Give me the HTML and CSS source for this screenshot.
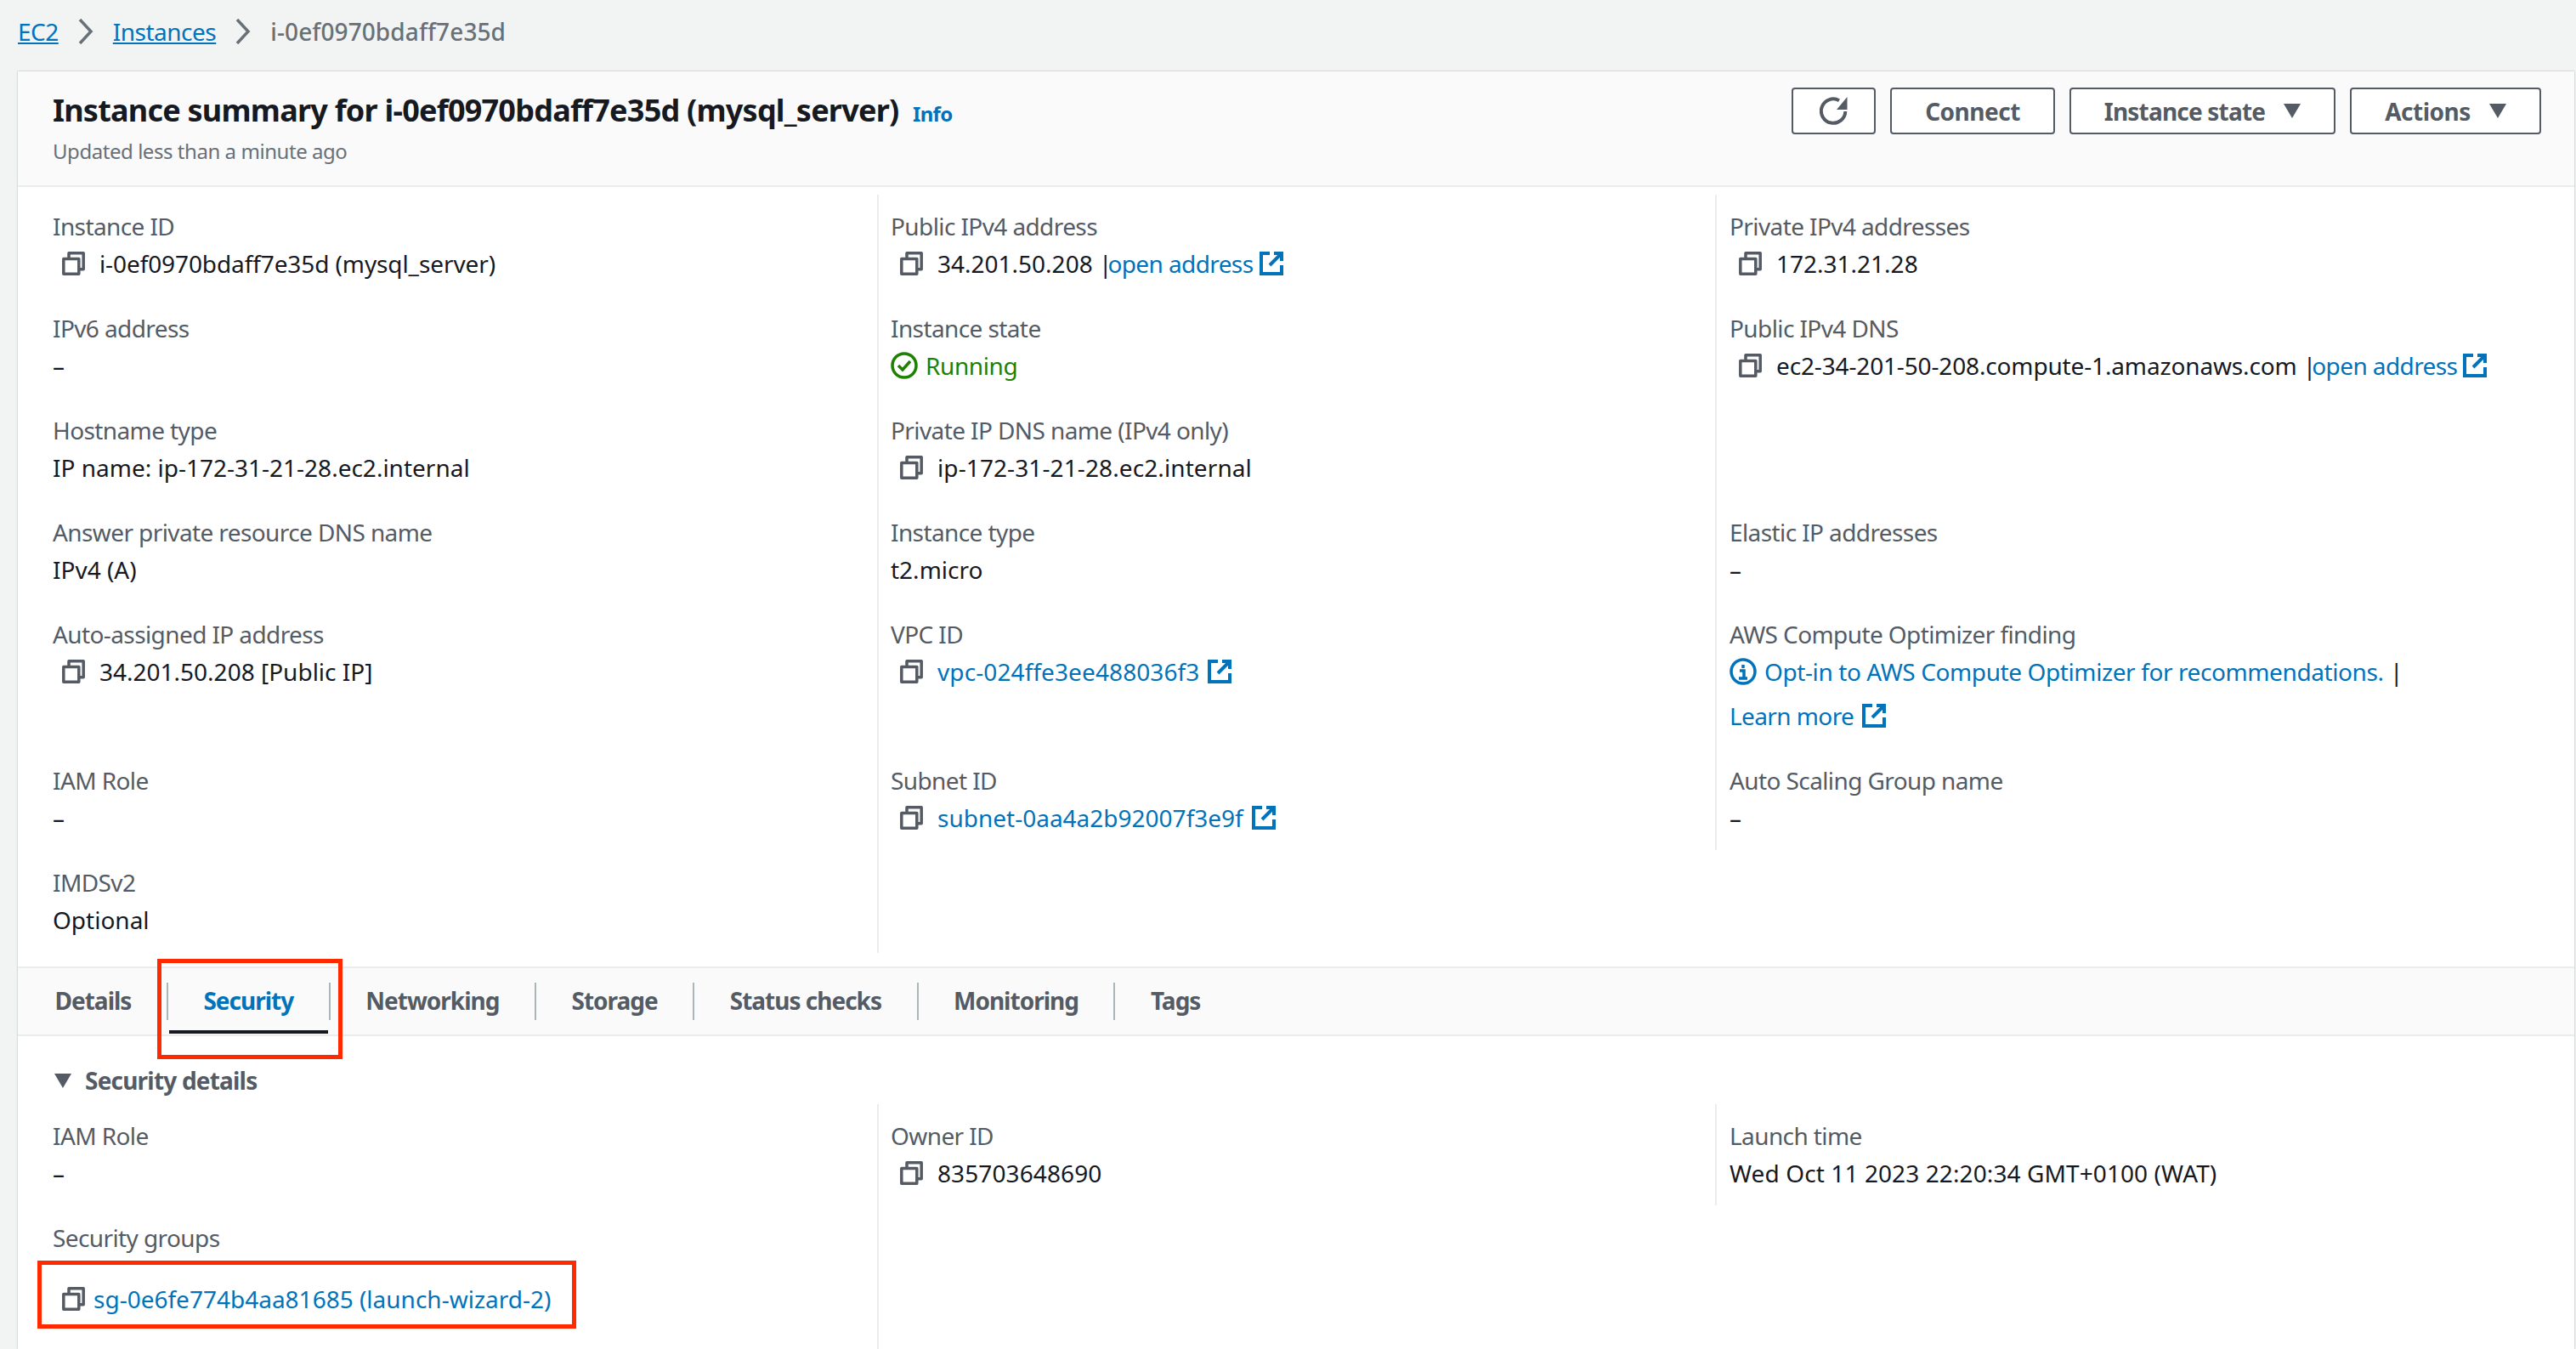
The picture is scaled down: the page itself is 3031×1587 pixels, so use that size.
FILE: index.html
```html
<!DOCTYPE html>
<html lang="en">
<head>
    <meta charset="UTF-8">
    <title>Instance summary</title>
    <link rel="stylesheet" href="styles.css">
</head>
<body>
    <svg class="defs" width="0" height="0">
        <symbol id="copy" viewBox="0 0 27 28"><path d="M1.8 8.5h18v17.7h-18z M8 7.5V1.8h17.2v19H20" fill="none" stroke="currentColor" stroke-width="3.5" stroke-linejoin="round"/></symbol>
        <symbol id="ext" viewBox="0 0 28 28"><path d="M12 2H2v24h24V16 M17 2h9v9 M26 2L12 16" fill="none" stroke="currentColor" stroke-width="4"/></symbol>
    </svg>

    <nav class="breadcrumb">
        <a href="#">EC2</a>
        <svg class="crumb-sep" viewBox="0 0 18 30"><path d="M2 1l13 14L2 29" fill="none" stroke="#687078" stroke-width="3.5"/></svg>
        <a href="#">Instances</a>
        <svg class="crumb-sep" viewBox="0 0 18 30"><path d="M2 1l13 14L2 29" fill="none" stroke="#687078" stroke-width="3.5"/></svg>
        <span class="crumb-current">i-0ef0970bdaff7e35d</span>
    </nav>

    <main class="card">
        <header class="card-header">
            <div>
                <h1>Instance summary for i-0ef0970bdaff7e35d (mysql_server) <a class="info" href="#">Info</a></h1>
                <p class="updated">Updated less than a minute ago</p>
            </div>
            <div class="actions">
                <button class="btn btn-icon"><svg width="33" height="33" viewBox="0 0 33 33"><path d="M23 4.2A14.2 14.2 0 1 0 30.3 17" fill="none" stroke="currentColor" stroke-width="4"/><path d="M32.5 0v15H20z" fill="currentColor"/></svg></button>
                <button class="btn btn-connect">Connect</button>
                <button class="btn btn-state">Instance state <i class="caret"></i></button>
                <button class="btn btn-actions">Actions <i class="caret"></i></button>
            </div>
        </header>

        <section class="summary">
            <div class="col">
                <div class="field"><div class="label">Instance ID</div><div class="value"><svg class="copy"><use href="#copy"/></svg><span class="instance-name">i-0ef0970bdaff7e35d (mysql_server)</span></div></div>
                <div class="field"><div class="label">IPv6 address</div><div class="value">–</div></div>
                <div class="field"><div class="label">Hostname type</div><div class="value">IP name: ip-172-31-21-28.ec2.internal</div></div>
                <div class="field"><div class="label">Answer private resource DNS name</div><div class="value">IPv4 (A)</div></div>
                <div class="field field-tall"><div class="label">Auto-assigned IP address</div><div class="value"><svg class="copy"><use href="#copy"/></svg>34.201.50.208 [Public IP]</div></div>
                <div class="field"><div class="label">IAM Role</div><div class="value">–</div></div>
                <div class="field"><div class="label">IMDSv2</div><div class="value">Optional</div></div>
            </div>
            <div class="col col-line">
                <div class="field"><div class="label">Public IPv4 address</div><div class="value"><svg class="copy"><use href="#copy"/></svg>34.201.50.208 |<a class="open-link" href="#">open address</a><svg class="ext"><use href="#ext"/></svg></div></div>
                <div class="field"><div class="label">Instance state</div><div class="value running"><svg class="status" viewBox="0 0 32 32"><circle cx="16" cy="16" r="14" fill="none" stroke="currentColor" stroke-width="3.5"/><path d="M9 16l5 5 9-10" fill="none" stroke="currentColor" stroke-width="3.5"/></svg>Running</div></div>
                <div class="field"><div class="label">Private IP DNS name (IPv4 only)</div><div class="value"><svg class="copy"><use href="#copy"/></svg><span class="digits">ip-172-31-21-28.ec2.internal</span></div></div>
                <div class="field"><div class="label">Instance type</div><div class="value">t2.micro</div></div>
                <div class="field field-tall"><div class="label">VPC ID</div><div class="value"><svg class="copy"><use href="#copy"/></svg><a class="digits" href="#">vpc-024ffe3ee488036f3</a><svg class="ext"><use href="#ext"/></svg></div></div>
                <div class="field"><div class="label">Subnet ID</div><div class="value"><svg class="copy"><use href="#copy"/></svg><a href="#">subnet-0aa4a2b92007f3e9f</a><svg class="ext"><use href="#ext"/></svg></div></div>
            </div>
            <div class="col col-line col-short">
                <div class="field"><div class="label">Private IPv4 addresses</div><div class="value"><svg class="copy"><use href="#copy"/></svg>172.31.21.28</div></div>
                <div class="field field-double"><div class="label">Public IPv4 DNS</div><div class="value"><svg class="copy"><use href="#copy"/></svg><span class="dns">ec2-34-201-50-208.compute-1.amazonaws.com</span>&nbsp;|<a class="open-link" href="#">open address</a><svg class="ext"><use href="#ext"/></svg></div></div>
                <div class="field"><div class="label">Elastic IP addresses</div><div class="value">–</div></div>
                <div class="field field-tall"><div class="label">AWS Compute Optimizer finding</div>
                    <div class="value"><svg class="status info-icon" viewBox="0 0 32 32"><circle cx="16" cy="16" r="14" fill="none" stroke="currentColor" stroke-width="3.5"/><path d="M16 8v4 M12 15h5v9 M11 24h10" fill="none" stroke="currentColor" stroke-width="3.5"/></svg><a class="opt-link" href="#">Opt-in to AWS Compute Optimizer for recommendations.</a>&nbsp;|</div>
                    <div class="value value-second"><a class="learn-link" href="#">Learn more</a><svg class="ext"><use href="#ext"/></svg></div>
                </div>
                <div class="field"><div class="label">Auto Scaling Group name</div><div class="value">–</div></div>
            </div>
        </section>

        <div class="tabs">
            <a class="tab" href="#">Details</a>
            <a class="tab tab-active" href="#">Security</a>
            <a class="tab" href="#">Networking</a>
            <a class="tab" href="#">Storage</a>
            <a class="tab" href="#">Status checks</a>
            <a class="tab" href="#">Monitoring</a>
            <a class="tab" href="#">Tags</a>
        </div>

        <h2 class="section-title"><i class="caret"></i>Security details</h2>

        <section class="summary summary-lower">
            <div class="col">
                <div class="field"><div class="label">IAM Role</div><div class="value">–</div></div>
                <div class="field"><div class="label">Security groups</div><div class="value value-sg"><svg class="copy"><use href="#copy"/></svg><a href="#">sg-0e6fe774b4aa81685 (launch-wizard-2)</a></div></div>
            </div>
            <div class="col col-line">
                <div class="field"><div class="label">Owner ID</div><div class="value"><svg class="copy"><use href="#copy"/></svg><span class="digits">835703648690</span></div></div>
            </div>
            <div class="col col-line col-short">
                <div class="field"><div class="label">Launch time</div><div class="value digits">Wed Oct 11 2023 22:20:34 GMT+0100 (WAT)</div></div>
            </div>
        </section>
    </main>

    <!-- red annotation boxes drawn over the screenshot -->
    <div class="mark mark-tab"></div>
    <div class="mark mark-sg"></div>
</body>
</html>
```

FILE: styles.css
```css
* {
    box-sizing: border-box;
}
html, body {
    margin: 0;
    height: 1587px;
    overflow: hidden;
}
body {
    position: relative;
    background-color: #f2f3f3;
    color: #16191f;
    font-family: "Noto Sans", Arial, sans-serif;
    font-size: 28px;
    line-height: 40px;
}
a {
    color: #0073bb;
    text-decoration: none;
}
.defs {
    position: absolute;
}
.breadcrumb {
    display: flex;
    align-items: center;
    height: 84px;
    padding: 0 0 10px 21px;
    color: #687078;
}
.breadcrumb a {
    text-decoration: underline;
    letter-spacing: -0.5px;
}
.crumb-sep {
    width: 18px;
    height: 30px;
    margin: 0 23px;
}
.crumb-current {
    font-weight: 500;
    letter-spacing: 0.1px;
}
.card {
    margin-left: 21px;
    margin-right: 2px;
    height: 1503px;
    background-color: white;
    box-shadow: 0 0 2px rgba(0, 0, 0, 0.3);
}
.card-header {
    display: flex;
    justify-content: space-between;
    height: 136px;
    padding: 19px 39px 0 41px;
    background-color: #fafafa;
    border-bottom: 2px solid #eaeded;
}
h1 {
    margin: 0;
    font-size: 36px;
    line-height: 54px;
    font-weight: 700;
    letter-spacing: -0.77px;
    white-space: nowrap;
}
.info {
    margin-left: 8px;
    font-size: 24px;
    letter-spacing: -0.7px;
}
.updated {
    margin: 1px 0 0;
    font-size: 24px;
    line-height: 32px;
    letter-spacing: -0.45px;
    color: #687078;
}
.actions {
    display: flex;
    gap: 17px;
    height: 55px;
}
.btn {
    display: flex;
    align-items: center;
    justify-content: center;
    gap: 22px;
    height: 55px;
    padding: 0;
    background-color: white;
    border: 2px solid #545b64;
    border-radius: 4px;
    color: #545b64;
    font: 700 28px "Noto Sans", Arial, sans-serif;
    letter-spacing: -0.5px;
}
.btn-icon { width: 99px; }
.btn-connect { width: 194px; }
.btn-state { width: 313px; letter-spacing: -0.8px; }
.btn-actions { width: 225px; }
.caret {
    display: inline-block;
    width: 0;
    height: 0;
    border-left: 10px solid transparent;
    border-right: 10px solid transparent;
    border-top: 17px solid #545b64;
}
.summary {
    display: grid;
    grid-template-columns: 1011px 986px 1fr;
    margin-top: 9px;
    height: 892px;
}
.col {
    display: flex;
    flex-direction: column;
    gap: 18px;
    padding: 17px 0 0 41px;
}
.col-line {
    padding-left: 14px;
    border-left: 2px solid #eaeded;
}
.col-short {
    align-self: start;
    padding-left: 15px;
}
.field {
    height: 102px;
}
.field-tall {
    height: 154px;
}
.field-double {
    height: 222px;
}
.label {
    color: #545b64;
    letter-spacing: -0.6px;
    white-space: nowrap;
}
.value {
    display: flex;
    align-items: center;
    margin-top: 4px;
    height: 40px;
    white-space: nowrap;
}
.value-second {
    margin-top: 12px;
}
.value-sg {
    margin-top: 32px;
}
.open-link {
    margin-left: -5px;
    letter-spacing: -0.6px;
}
.open-link + .ext {
    margin-left: 7px;
}
.opt-link {
    letter-spacing: -0.4px;
}
.learn-link {
    letter-spacing: -0.6px;
}
.instance-name {
    letter-spacing: -0.1px;
}
.dns {
    letter-spacing: -0.15px;
}
.digits {
    letter-spacing: 0.1px;
}
.copy {
    flex: none;
    width: 27px;
    height: 28px;
    margin: 0 17px 0 11px;
    color: #545b64;
}
.value-sg .copy {
    margin-right: 10px;
}
.ext {
    flex: none;
    width: 28px;
    height: 28px;
    margin-left: 10px;
    color: #0073bb;
}
.running {
    color: #1d8102;
    letter-spacing: -0.4px;
}
.status {
    flex: none;
    width: 32px;
    height: 32px;
    margin-right: 9px;
}
.info-icon {
    color: #0073bb;
}
.tabs {
    display: flex;
    align-items: center;
    height: 82px;
    margin-top: 16px;
    background-color: #fafafa;
    border-top: 2px solid #eaeded;
    border-bottom: 2px solid #eaeded;
}
.tab {
    position: relative;
    height: 44px;
    line-height: 43px;
    padding: 0 41.5px;
    color: #545b64;
    font-weight: 700;
    letter-spacing: -1px;
    border-left: 2px solid #aab7b8;
}
.tab:first-child {
    border-left: 2px solid transparent;
}
.tab-active {
    color: #0073bb;
}
.tab-active::after {
    content: "";
    position: absolute;
    left: 1px;
    right: 1px;
    bottom: -16px;
    height: 4px;
    background-color: #16191f;
}
.section-title {
    display: flex;
    align-items: center;
    gap: 16px;
    margin: 32px 0 0 43px;
    font-size: 28px;
    line-height: 40px;
    font-weight: 700;
    letter-spacing: -0.8px;
    color: #545b64;
}
.summary-lower {
    margin-top: 8px;
    height: 288px;
}
.mark {
    position: absolute;
    border: 5px solid #ff2a00;
}
.mark-tab {
    left: 185px;
    top: 1128px;
    width: 218px;
    height: 118px;
}
.mark-sg {
    left: 44px;
    top: 1483px;
    width: 634px;
    height: 80px;
}
```
